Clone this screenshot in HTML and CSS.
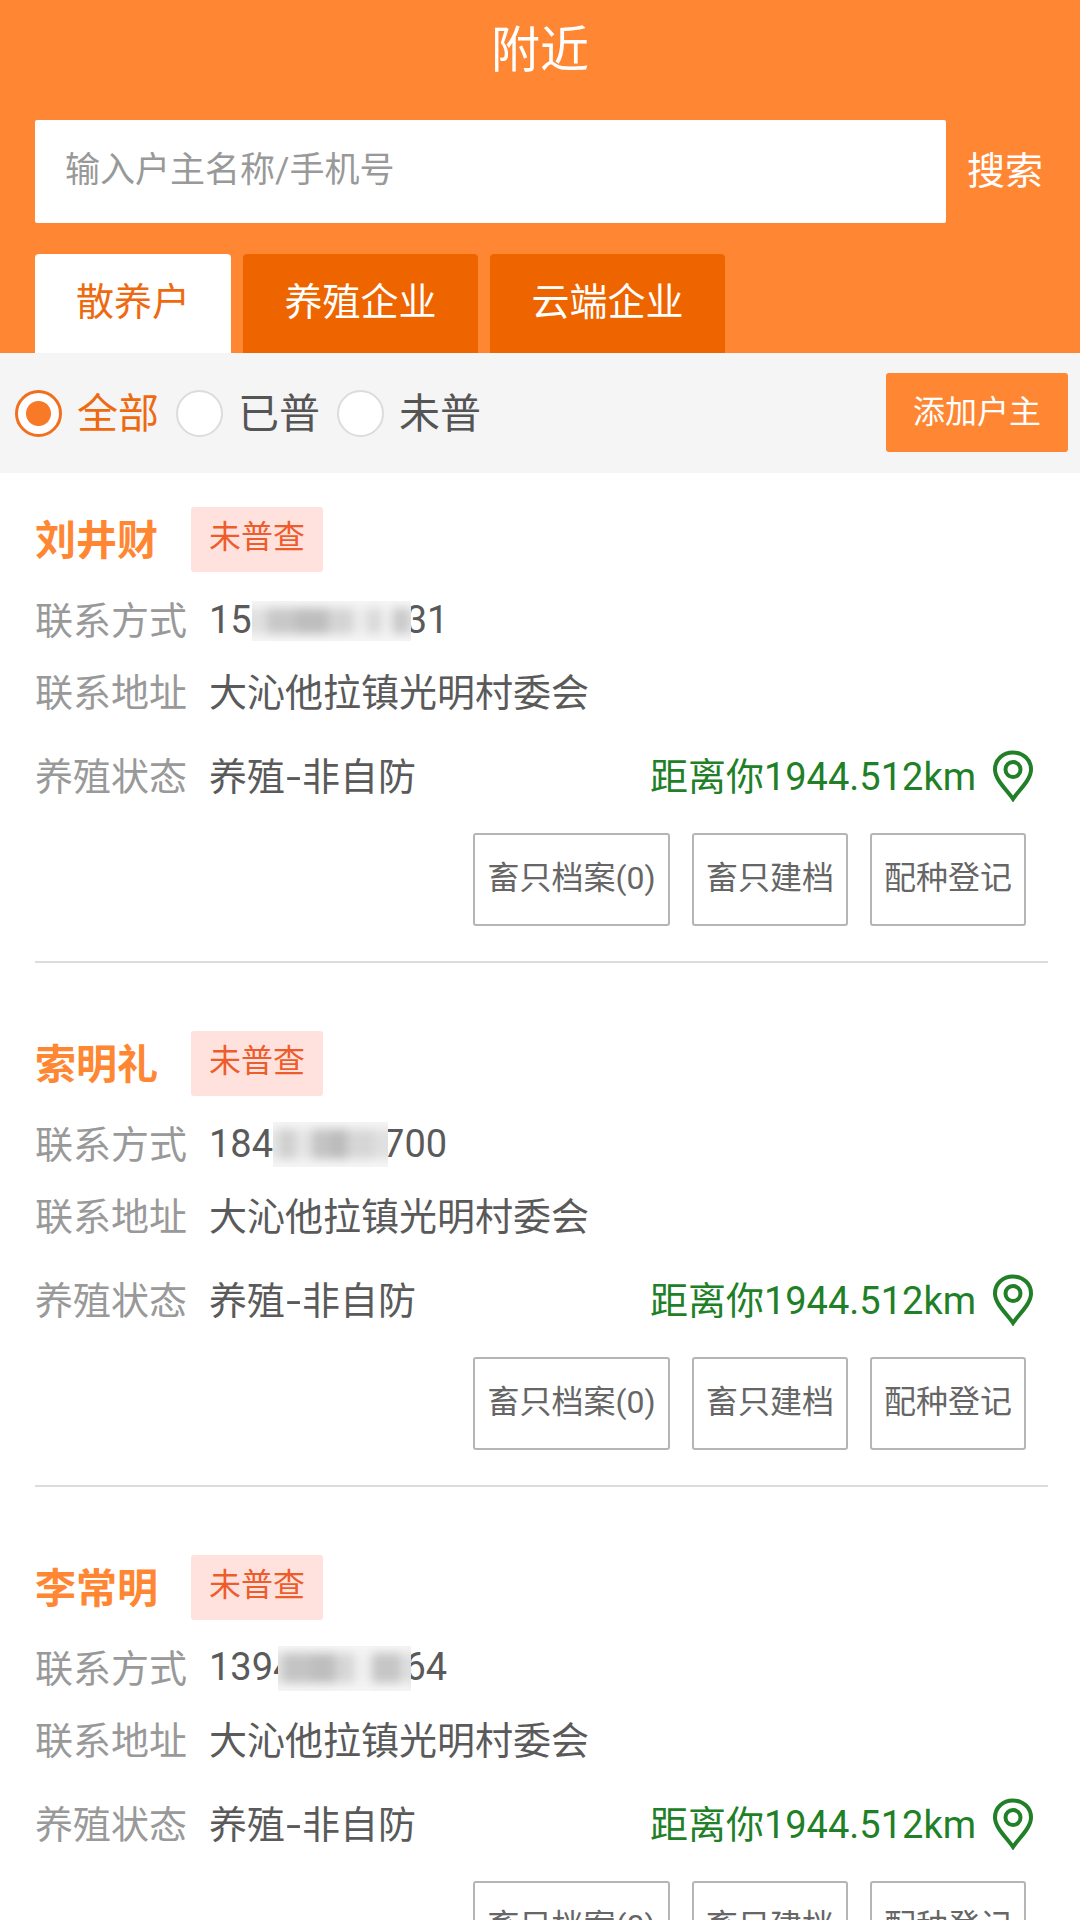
FILE: index.html
```html
<!DOCTYPE html>
<html lang="zh-CN">
<head>
<meta charset="utf-8">
<title>附近</title>
<link rel="stylesheet" href="styles.css">
</head>
<body>
<div class="app">
  <header class="header">
    <h1 class="title">附近</h1>
    <form class="search">
      <input class="search-input" type="text" placeholder="输入户主名称/手机号">
      <span class="search-btn">搜索</span>
    </form>
    <nav class="tabs">
      <a class="tab tab-active tab-first">散养户</a>
      <a class="tab tab-wide">养殖企业</a>
      <a class="tab tab-wide">云端企业</a>
    </nav>
  </header>

  <section class="filter">
    <div class="radios">
      <span class="radio radio-on"></span><span class="radio-label radio-label-on">全部</span>
      <span class="radio"></span><span class="radio-label">已普</span>
      <span class="radio"></span><span class="radio-label">未普</span>
    </div>
    <a class="add-btn">添加户主</a>
  </section>

  <main class="list">
    <article class="card">
      <div class="card-head"><span class="name">刘井财</span><span class="tag">未普查</span></div>
      <div class="row"><span class="label">联系方式</span><span class="value value-phone">15<span class="mask mask-a"><i></i></span>31</span></div>
      <div class="row"><span class="label">联系地址</span><span class="value">大沁他拉镇光明村委会</span></div>
      <div class="row row-status">
        <span class="label">养殖状态</span><span class="value">养殖<span class="dash">-</span>非自防</span>
        <span class="distance">距离你1944.512km
          <svg class="pin" viewBox="0 0 42 52"><path d="M21 49 C15 40 3 30 3 19.500 C3 9.500 11 2.500 21 2.500 C31 2.500 39 9.500 39 19.500 C39 30 27 40 21 49 Z"/><circle cx="21" cy="19.500" r="7.500"/></svg>
        </span>
      </div>
      <div class="actions"><a class="action action-long">畜只档案(0)</a><a class="action">畜只建档</a><a class="action">配种登记</a></div>
    </article>

    <article class="card">
      <div class="card-head"><span class="name">索明礼</span><span class="tag">未普查</span></div>
      <div class="row"><span class="label">联系方式</span><span class="value value-phone">184<span class="mask mask-b"><i></i></span>700</span></div>
      <div class="row"><span class="label">联系地址</span><span class="value">大沁他拉镇光明村委会</span></div>
      <div class="row row-status">
        <span class="label">养殖状态</span><span class="value">养殖<span class="dash">-</span>非自防</span>
        <span class="distance">距离你1944.512km
          <svg class="pin" viewBox="0 0 42 52"><path d="M21 49 C15 40 3 30 3 19.500 C3 9.500 11 2.500 21 2.500 C31 2.500 39 9.500 39 19.500 C39 30 27 40 21 49 Z"/><circle cx="21" cy="19.500" r="7.500"/></svg>
        </span>
      </div>
      <div class="actions"><a class="action action-long">畜只档案(0)</a><a class="action">畜只建档</a><a class="action">配种登记</a></div>
    </article>

    <article class="card">
      <div class="card-head"><span class="name">李常明</span><span class="tag">未普查</span></div>
      <div class="row"><span class="label">联系方式</span><span class="value value-phone">1394<span class="mask mask-c"><i></i></span>64</span></div>
      <div class="row"><span class="label">联系地址</span><span class="value">大沁他拉镇光明村委会</span></div>
      <div class="row row-status">
        <span class="label">养殖状态</span><span class="value">养殖<span class="dash">-</span>非自防</span>
        <span class="distance">距离你1944.512km
          <svg class="pin" viewBox="0 0 42 52"><path d="M21 49 C15 40 3 30 3 19.500 C3 9.500 11 2.500 21 2.500 C31 2.500 39 9.500 39 19.500 C39 30 27 40 21 49 Z"/><circle cx="21" cy="19.500" r="7.500"/></svg>
        </span>
      </div>
      <div class="actions"><a class="action action-long">畜只档案(0)</a><a class="action">畜只建档</a><a class="action">配种登记</a></div>
    </article>
  </main>
</div>
</body>
</html>
```
FILE: styles.css
```css
* { box-sizing: border-box; }

html, body {
  margin: 0;
  height: 1920px;
  overflow: hidden;
  background: #fff;
}

body {
  font-family: Roboto, "Noto Sans CJK SC", sans-serif;
}

.app {
  width: 1080px;
  height: 1920px;
  overflow: hidden;
}

/* Orange header: title, search field, category tabs */
.header {
  height: 353px;
  background: #ff8733;
  padding-top: 21px;
}

.title {
  margin: 0;
  height: 60px;
  line-height: 60px;
  font-size: 49px;
  font-weight: 400;
  text-align: center;
  color: #fff;
}

.search {
  display: flex;
  align-items: center;
  margin: 39px 0 0 35px;
  height: 103px;
}

.search-input {
  width: 911px;
  height: 103px;
  padding: 0 0 2px 30px;
  border: 0;
  border-radius: 2px;
  outline: 0;
  background: #fff;
  font: 400 35px Roboto, "Noto Sans CJK SC", sans-serif;
}

.search-input::placeholder {
  color: #999;
  opacity: 1;
}

.search-btn {
  margin-left: 21px;
  padding-bottom: 9px;
  font-size: 38px;
  color: #fff;
}

.tabs {
  display: flex;
  gap: 12px;
  margin: 31px 0 0 35px;
}

.tab {
  height: 99px;
  line-height: 96px;
  text-align: center;
  font-size: 38px;
  color: #fff;
  background: #ee6500;
  border-radius: 4px 4px 0 0;
}

.tab-first { width: 196px; }
.tab-wide { width: 235px; }

.tab-active {
  background: #fff;
  color: #ee6a10;
}

/* Survey status filter */
.filter {
  display: flex;
  align-items: center;
  justify-content: space-between;
  height: 120px;
  padding: 0 12px 0 15px;
  background: #f5f5f6;
}

.radios {
  display: flex;
  align-items: center;
}

.radio {
  width: 47px;
  height: 47px;
  border: 2px solid #dcdcdc;
  border-radius: 50%;
  background: #fff;
}

.radio-on {
  border: 3px solid #f0701e;
  background: radial-gradient(circle, #f87a26 0 12px, #fff 13px);
}

.radio-label {
  width: 114px;
  padding: 0 0 6px 15px;
  font-size: 41px;
  color: #555;
  white-space: nowrap;
}

.radio-label-on { color: #ee6a10; }

.add-btn {
  width: 182px;
  height: 79px;
  margin-bottom: 2px;
  line-height: 78px;
  text-align: center;
  font-size: 32px;
  color: #fff;
  background: #ff8733;
  border-radius: 3px;
}

/* Farmer cards */
.card {
  margin: 0 32px 34px 35px;
  padding: 34px 0 35px;
  border-bottom: 2px solid #dcdcdc;
}

.card-head {
  display: flex;
  align-items: center;
  height: 65px;
}

.name {
  width: 156px;
  padding-bottom: 6px;
  font-size: 41px;
  font-weight: 700;
  color: #ff8733;
}

.tag {
  width: 132px;
  height: 65px;
  line-height: 61px;
  text-align: center;
  font-size: 32px;
  color: #ee5c2c;
  background: #ffe2de;
  border-radius: 3px;
}

.row {
  display: flex;
  align-items: center;
  height: 72px;
  padding-bottom: 6px;
  font-size: 38px;
}

.card-head + .row { margin-top: 12px; }

.row-status {
  margin-top: 13px;
  padding-right: 14px;
  padding-bottom: 8px;
}

.label {
  width: 174px;
  color: #999;
  flex: none;
}

.value {
  color: #5a5a5a;
  white-space: nowrap;
}

.value-phone { margin-top: 6px; }

/* Stretched hyphen between the two parts of the breeding status */
.dash {
  display: inline-block;
  width: 17px;
  text-align: center;
  transform: scaleX(1.400);
}

/* Hidden middle digits of a phone number */
.mask {
  position: relative;
  display: inline-block;
  overflow: hidden;
  background: #f6f6f6;
}

.mask i {
  display: block;
  height: 26px;
  margin: 7px -10px;
  filter: blur(5px);
}

.mask-a {
  width: 159px;
  height: 40px;
  margin-right: -5px;
  vertical-align: -8px;
}

.mask-a i {
  background: linear-gradient(90deg, #e0e0e0 0 14%, #c8c8c8 14% 30%, #bebebe 30% 48%, #d4d4d4 48% 62%, #ececec 62% 70%, #dadada 70% 78%, #f2f2f2 78% 84%, #cbcbcb 84% 94%, #e8e8e8 94%);
}

.mask-b {
  width: 115px;
  height: 45px;
  margin-right: -5px;
  vertical-align: -10px;
}

.mask-b i {
  height: 30px;
  background: linear-gradient(90deg, #e6e6e6 0 12%, #cfcfcf 12% 24%, #e4e4e4 24% 36%, #c4c4c4 36% 50%, #bcbcbc 50% 62%, #d6d6d6 62% 82%, #e0e0e0 82%);
}

.mask-c {
  width: 133px;
  height: 45px;
  margin-left: -16px;
  margin-right: -7px;
  vertical-align: -11px;
}

.mask-c i {
  height: 30px;
  background: linear-gradient(90deg, #e2e2e2 0 10%, #c4c4c4 10% 28%, #bebebe 28% 44%, #d6d6d6 44% 56%, #efefef 56% 68%, #c6c6c6 68% 86%, #dedede 86%);
}

.distance {
  display: flex;
  align-items: center;
  margin-left: auto;
  color: #217f27;
  white-space: nowrap;
}

.pin {
  width: 42px;
  height: 52px;
  margin: 6px 0 0 16px;
  fill: none;
  stroke: #217f27;
  stroke-width: 4;
}

.actions {
  display: flex;
  justify-content: flex-end;
  gap: 22px;
  margin-top: 20px;
  padding-right: 22px;
}

.action {
  width: 156px;
  height: 93px;
  line-height: 87px;
  text-align: center;
  font-size: 32px;
  color: #666;
  border: 2px solid #b5b5b5;
  border-radius: 3px;
}

.action-long { width: 197px; }
```
